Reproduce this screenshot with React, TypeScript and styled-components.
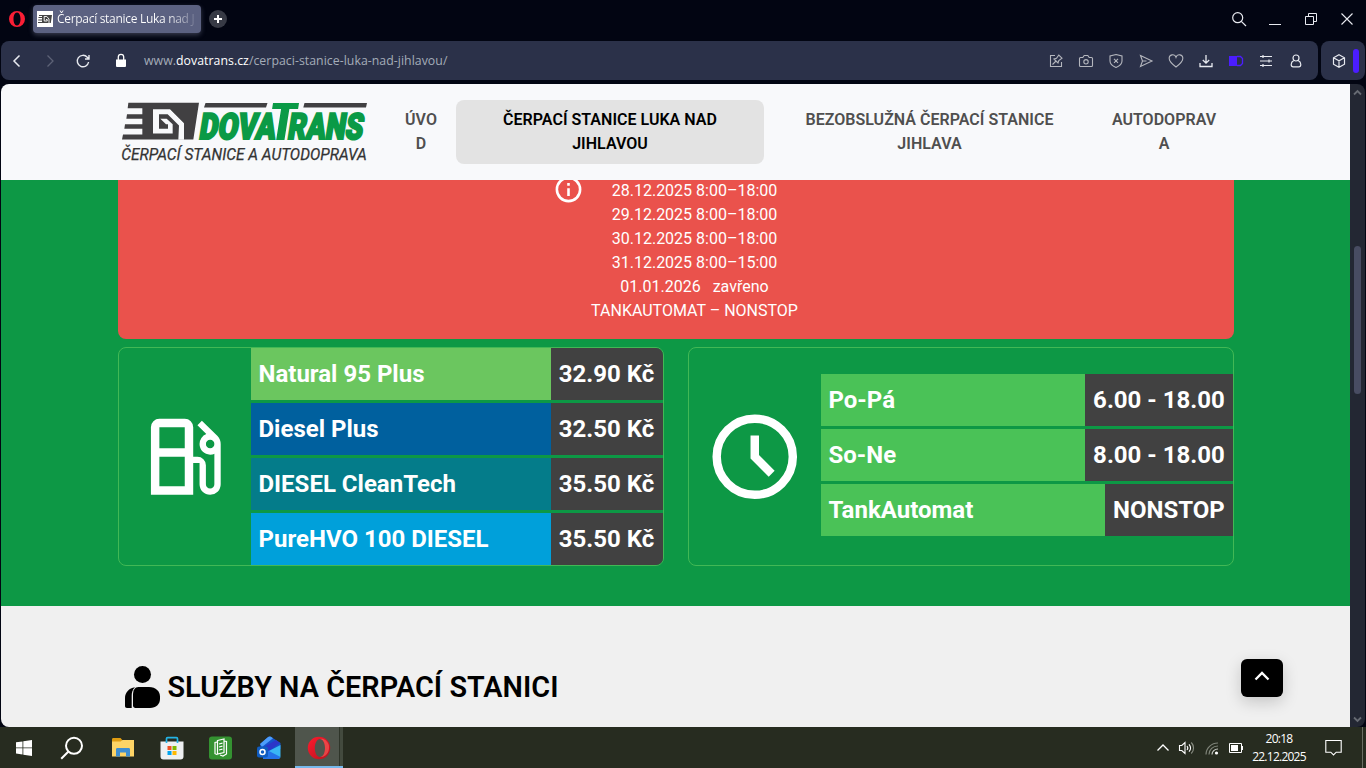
import React from 'react';
import styled, { createGlobalStyle } from 'styled-components';

const GlobalStyle = createGlobalStyle`
  * { box-sizing: border-box; }
  body { margin: 0; background: #020512; overflow: hidden; }
  svg { display: block; flex: none; }
`;

const uiFont = '"Open Sans", "Noto Sans", sans-serif';

const Desktop = styled.div`
  width: 1366px;
  height: 768px;
  display: flex;
  flex-direction: column;
  overflow: hidden;
  background: #020512;
  font-family: Roboto, sans-serif;
`;

const TabBar = styled.div`
  height: 41px;
  flex: none;
  display: flex;
  align-items: center;
  padding: 0 11px 3px 8px;
`;

const Tab = styled.div`
  width: 168px;
  height: 28px;
  margin: 0 8px 0 7px;
  padding: 0 4px;
  display: flex;
  align-items: center;
  gap: 4px;
  border-radius: 4px;
  background: #5b6181;
  box-shadow: 0 2px 5px rgba(120, 125, 150, 0.45);
`;

const TabTitle = styled.span`
  flex: 1;
  overflow: hidden;
  white-space: nowrap;
  font: 12px/20px ${uiFont};
  letter-spacing: -0.3px;
  color: transparent;
  background: linear-gradient(90deg, #fff 78%, #5b6181 102%);
  background-clip: text;
  -webkit-background-clip: text;
`;

const WindowButtons = styled.div`
  margin-left: auto;
  display: flex;
  align-items: center;
  gap: 20px;
`;

const AddressRow = styled.div`
  height: 39px;
  flex: none;
  display: flex;
  gap: 3px;
  padding: 0 1px;
`;

const AddressBar = styled.div`
  width: 1317px;
  display: flex;
  align-items: center;
  border-radius: 8px;
  background: #2b3149;
  padding: 0 14px 0 8px;
`;

const NavIcons = styled.div`
  display: flex;
  align-items: center;
  gap: 17px;
`;

const Url = styled.div`
  margin-left: 15px;
  font: 12.3px/20px ${uiFont};
  letter-spacing: 0.04px;
  color: #a4acb8;
  b { font-weight: 400; color: #fff; }
`;

const Tools = styled.div`
  margin-left: auto;
  display: flex;
  gap: 14px;
`;

const SideButton = styled.div`
  width: 44px;
  border-radius: 8px;
  background: #2b3149;
  display: flex;
  align-items: center;
  padding-left: 10px;
  gap: 6px;
`;

const SideAccent = styled.i`
  width: 6px;
  height: 24px;
  border-radius: 3px;
  background: #4b1dff;
`;

const Viewport = styled.div`
  height: 643px;
  margin: 4px 1px 0;
  flex: none;
  display: flex;
  border-radius: 8px;
  overflow: hidden;
`;

const Page = styled.main`
  width: 1349px;
  display: flex;
  flex-direction: column;
  position: relative;
`;

const Scrollbar = styled.div`
  width: 15px;
  background: #232733;
  display: flex;
  flex-direction: column;
  align-items: center;
  justify-content: space-between;
  padding: 5px 0 4px;
`;

const ScrollThumb = styled.i`
  width: 7px;
  height: 148px;
  margin-top: -172px;
  border-radius: 4px;
  background: #484c62;
`;

const Header = styled.header`
  height: 96px;
  flex: none;
  background: #f8f9fb;
  display: flex;
  align-items: center;
  padding-left: 117px;
`;

const Menu = styled.nav`
  display: flex;
  margin-left: 18px;
`;

const MenuItem = styled.a<{ $w: number; $ml?: number; $active?: boolean }>`
  width: ${p => p.$w}px;
  height: 64px;
  margin-left: ${p => p.$ml ?? 0}px;
  padding: 8px 0;
  border-radius: 8px;
  text-align: center;
  white-space: pre-line;
  font-size: 16px;
  line-height: 24px;
  font-weight: 600;
  letter-spacing: 0.02px;
  color: ${p => (p.$active ? '#000' : '#4f4f4f')};
  background: ${p => (p.$active ? '#e3e3e3' : 'transparent')};
`;

const GreenSection = styled.section`
  height: 426px;
  flex: none;
  background: #0d9845;
  padding: 0 116px 0 117px;
`;

const Alert = styled.div`
  height: 159px;
  overflow: hidden;
  border-radius: 0 0 8px 8px;
  background: #ea524c;
  color: #fff;
  display: flex;
  justify-content: center;
  align-items: flex-start;
  gap: 7.5px;
  padding-right: 1.5px;
  font-size: 16px;
  line-height: 24px;
  text-align: center;
  svg { margin-top: -6.5px; }
`;

const AlertText = styled.div`
  margin-top: -1px;
  white-space: pre;
`;

const Cards = styled.div`
  margin-top: 8px;
  display: flex;
  gap: 24px;
`;

const Card = styled.div`
  width: 546px;
  height: 219px;
  border: 1px solid #42b855;
  border-radius: 8px;
  overflow: hidden;
  display: flex;
  align-items: center;
`;

const CardIcon = styled.div`
  width: 132px;
  display: flex;
  justify-content: center;
  svg { fill: #fff; }
`;

const Rows = styled.div<{ $tail?: boolean }>`
  flex: 1;
  display: flex;
  flex-direction: column;
  gap: 3px;
  padding-bottom: ${p => (p.$tail ? 3 : 0)}px;
`;

const Row = styled.div`
  display: flex;
  font-size: 24px;
  line-height: 36px;
  font-weight: 700;
  color: #fff;
`;

const RowName = styled.div<{ $bg: string }>`
  flex: 1;
  padding: 8px 7.5px;
  background: ${p => p.$bg};
`;

const RowValue = styled.div`
  min-width: 112px;
  padding: 8px 8.2px 8px 7.8px;
  background: #414141;
`;

const Services = styled.section`
  flex: 1;
  background: #f0f0f0;
  padding: 58px 0 0 117px;
`;

const Heading = styled.h2`
  margin: 0;
  display: flex;
  align-items: center;
  gap: 0.5px;
  font-size: 28.8px;
  line-height: 46px;
  font-weight: 600;
  letter-spacing: 0.04px;
  color: #000;
`;

const TopButton = styled.button`
  position: absolute;
  right: 67px;
  bottom: 30px;
  width: 42px;
  height: 38px;
  border: 0;
  border-radius: 6px;
  background: #000;
  display: flex;
  align-items: center;
  justify-content: center;
  padding: 0 1px 4px 0;
  box-shadow: 0 5px 16px rgba(0, 0, 0, 0.18);
`;

const Taskbar = styled.footer`
  height: 41px;
  flex: none;
  display: flex;
  background: #272c20;
  color: #fff;
`;

const TaskItem = styled.div<{ $active?: boolean; $nudge?: number }>`
  width: ${p => (p.$active ? 48 : 49.2)}px;
  display: flex;
  align-items: center;
  justify-content: center;
  background: ${p => (p.$active ? 'linear-gradient(90deg, #4f554c 44px, #2e3429 44px, #2e3429 45px, #434a3e 45px)' : 'transparent')};
  box-shadow: ${p => (p.$active ? 'inset 0 -2px #76b9ed' : 'none')};
  padding-right: ${p => p.$nudge ?? 0}px;
`;

const Tray = styled.div`
  margin-left: auto;
  display: flex;
  align-items: center;
  padding-right: 3px;
`;

const Clock = styled.div`
  width: 70px;
  margin: 0 11px 0 0;
  text-align: center;
  font: 12px/18px ${uiFont};
  letter-spacing: -0.75px;
`;

const ShowDesktop = styled.i`
  width: 1px;
  height: 41px;
  margin-left: 20px;
  background: #6a6e63;
`;

type LineIconProps = { size?: number; w?: number; color?: string; children: React.ReactNode };
const LineIcon = ({ size = 16, w = 1.1, color = '#e8eaf0', children }: LineIconProps) => (
  <svg width={size} height={size} viewBox="0 0 16 16" fill="none" stroke={color} strokeWidth={w}>{children}</svg>
);

const Favicon = () => (
  <svg width="16" height="16" viewBox="0 0 16 16">
    <path fill="#fff" d="M0 0h16v16H0z" />
    <path fill="#444" d="M2 4h13l-1.200 8H1v-1h4v-1.500H1.200v-1H5V7H1.500V6H5V5H2z" />
    <path fill="none" stroke="#fff" strokeWidth=".9" d="M12 12V8L9.800 5.500H7.200v4.500h3V8.500H9" />
  </svg>
);

const Logo = () => (
  <svg width="264" height="64" viewBox="0 0 264 64">
    <g transform="translate(0 -2.500) scale(.33333)" fill="#414042">
      <path d="M31 16H243L226 126H12L15 111H73V94H19L21 80H73V64H25L27 50H73V32H29z" />
      <path fill="#f8f9fb" d="M105 35H156L198 77V127H181L183 84 149 50H123V94H150V80H144L127 64H146L164 80V108H105z" />
    </g>
    <g fill="#414042">
      <path d="M87.500 3h62l-1.500 4.500H86zM186.500 3H249l-1 4.500h-62.700z" />
    </g>
    <g transform="skewX(-9)" fill="#0a9a46" stroke="#0a9a46" strokeWidth="2.200" fontFamily="Roboto, sans-serif" fontWeight="900">
      <text x="86.500" y="38.800" fontSize="36" textLength="76" lengthAdjust="spacingAndGlyphs">DOVA</text>
      <text x="175" y="38.800" fontSize="36" textLength="75" lengthAdjust="spacingAndGlyphs">RANS</text>
      <path stroke="none" d="M155.500 3h26v6h-8.700v31H164.500V9h-9z" />
    </g>
    <text x="3.300" y="60.300" fontSize="16" fontStyle="italic" fontFamily="Roboto, sans-serif" fill="#333" stroke="#333" strokeWidth=".25" textLength="245.500" lengthAdjust="spacingAndGlyphs">ČERPACÍ STANICE A AUTODOPRAVA</text>
  </svg>
);

const FuelIcon = () => (
  <svg width="101.500" height="101.500" viewBox="0 0 24 24">
    <path d="M4 21V5q0-.825.588-1.413T6 3h6q.825 0 1.413.588T14 5v7h1q.825 0 1.413.588T17 14v4.500q0 .425.288.713T18 19.500t.713-.288T19 18.500v-7.200q-.225.125-.475.163T18 11.500q-1.050 0-1.775-.725T15.500 9q0-.8.438-1.438T17.100 6.650L15 4.550l1.050-1.050 3.700 3.600q.375.375.563.875T20.500 9v9.500q0 1.050-.725 1.775T18 21t-1.775-.725T15.500 18.500v-5H14V21zm2-11h6V5H6zm12 0q.425 0 .713-.288T19 9t-.288-.712T18 8t-.712.288T17 9t.288.713T18 10M6 19h6v-7H6z" />
  </svg>
);

const ClockIcon = () => (
  <svg width="101.500" height="101.500" viewBox="0 0 24 24">
    <circle cx="12" cy="12" r="9" fill="none" stroke="#fff" strokeWidth="2" />
    <path d="M15.300 16.700 16.700 15.300 13 11.600V7H11v5.400z" />
  </svg>
);

const InfoIcon = () => (
  <svg width="31" height="31" viewBox="0 0 24 24" fill="#fff">
    <circle cx="12" cy="12" r="9" fill="none" stroke="#fff" strokeWidth="2" />
    <path d="M11 11h2v6h-2zM11 7h2v2h-2z" />
  </svg>
);

const PersonIcon = () => (
  <svg width="49" height="46" viewBox="0 0 49 46">
    <circle cx="24.500" cy="10.500" r="8.500" />
    <path d="M20.500 23H31c7 0 11 4.500 11 9.500V35c0 5-4 9-10 9H17.500c-1.500 0-2.500-1-2.500-2.500V31c0-5 1.800-8 5.500-8z" />
    <path d="M17 23.200c-2.800 2.500-3.300 5.800-3.300 8.800v12H9c-1.300 0-2-.7-2-2v-8c0-5.500 4-10 10-10.800z" />
  </svg>
);

const OperaBig = () => (
  <svg width="24" height="24" viewBox="0 0 24 24">
    <defs>
      <linearGradient id="op" x1="0" x2="1" y1="0" y2="1"><stop offset="0" stopColor="#ff1b2d" /><stop offset="1" stopColor="#b5121f" /></linearGradient>
    </defs>
    <path fill="url(#op)" fillRule="evenodd" d="M12 .8a11.200 11.200 0 1 0 0 22.400A11.200 11.200 0 0 0 12 .8zm1 2.200c3 0 5 4 5 9s-2 9-5 9-5.200-4-5.200-9S10 3 13 3z" />
    <path fill="#ff6b62" d="M13 3c4-1 7 2 8.500 5 1.500 4 0 9-2.500 11-2 1.800-4 2-6 2 3 0 5-4 5-9s-2-9-5-9z" opacity=".55" />
  </svg>
);

const fuels = [
  { name: 'Natural 95 Plus', price: '32.90 Kč', color: '#6bc65f' },
  { name: 'Diesel Plus', price: '32.50 Kč', color: '#00609e' },
  { name: 'DIESEL CleanTech', price: '35.50 Kč', color: '#047c8a' },
  { name: 'PureHVO 100 DIESEL', price: '35.50 Kč', color: '#00a0da' },
];

const hours = [
  { name: 'Po-Pá', time: '6.00 - 18.00' },
  { name: 'So-Ne', time: '8.00 - 18.00' },
  { name: 'TankAutomat', time: 'NONSTOP' },
];

const notice = [
  '28.12.2025 8:00–18:00',
  '29.12.2025 8:00–18:00',
  '30.12.2025 8:00–18:00',
  '31.12.2025 8:00–15:00',
  '01.01.2026   zavřeno',
  'TANKAUTOMAT – NONSTOP',
].join('\n');

const grey = '#b4b6bd';

export default function App() {
  return (
    <Desktop>
      <GlobalStyle />
      <TabBar>
        <svg width="18" height="18" viewBox="0 0 18 18">
          <path fill="#fa1e35" fillRule="evenodd" d="M9 1a8 8 0 1 0 0 16A8 8 0 0 0 9 1zm0 1.500c2.300 0 3.500 3 3.500 6.500s-1.200 6.500-3.500 6.500S5.500 12.500 5.500 9 6.700 2.500 9 2.500z" />
        </svg>
        <Tab>
          <Favicon />
          <TabTitle>Čerpací stanice Luka nad J</TabTitle>
        </Tab>
        <svg width="18" height="18" viewBox="0 0 18 18">
          <circle cx="9" cy="9" r="9" fill="#373a45" />
          <path d="M9 5v8M5 9h8" stroke="#fff" strokeWidth="2" />
        </svg>
        <WindowButtons>
          <LineIcon w={1.200}><circle cx="6.700" cy="6.700" r="5" /><path d="m10.300 10.300 4.700 4.700" /></LineIcon>
          <LineIcon w={1}><path d="M2 13.500h12" /></LineIcon>
          <LineIcon w={1}><path d="M2.500 5.500h8v8h-8zM5.500 5.500v-3h8v8h-3" /></LineIcon>
          <LineIcon w={1.100}><path d="m2.500 2.500 11 11m0-11-11 11" /></LineIcon>
        </WindowButtons>
      </TabBar>

      <AddressRow>
        <AddressBar>
          <NavIcons>
            <LineIcon w={1.500}><path d="m10.500 2.500-5.500 5.500 5.500 5.500" /></LineIcon>
            <LineIcon w={1.300} color="#5d6276"><path d="m5.500 2.500 5.500 5.500-5.500 5.500" /></LineIcon>
            <LineIcon w={1.400}><path d="M13.600 9a5.700 5.700 0 1 1-1.300-4.700l1.500 1.400M14 2v4h-4" /></LineIcon>
            <svg width="16" height="16" viewBox="0 0 16 16" style={{ marginLeft: 5 }}>
              <path fill="#fff" d="M3 6.500h10V13a1 1 0 0 1-1 1H4a1 1 0 0 1-1-1z" />
              <path fill="none" stroke="#fff" strokeWidth="1.300" d="M5.300 7V4a2.700 2.700 0 0 1 5.400 0v3" />
            </svg>
          </NavIcons>
          <Url>www.<b>dovatrans.cz</b>/cerpaci-stanice-luka-nad-jihlavou/</Url>
          <Tools>
            <LineIcon color={grey}><path d="M7 2.500H2.500v11h11V9M4.500 11.500 8 8M6 6l4 4 .8-2.500L14 5.200 10.800 2 8.500 5.200z" /></LineIcon>
            <LineIcon color={grey}><path d="M2.500 4.500h2.300l1.400-2h3.600l1.400 2h2.300c.7 0 1 .3 1 1v7c0 .7-.3 1-1 1h-11c-.7 0-1-.3-1-1v-7c0-.7.300-1 1-1z" /><circle cx="8" cy="8.800" r="2.200" /></LineIcon>
            <LineIcon color={grey}><path d="M8 1.500 14 3v5c0 3-2.500 5-6 6.500C4.500 13 2 11 2 8V3zM6 5.800l4 4m0-4-4 4" /></LineIcon>
            <LineIcon color={grey}><path d="m2.500 2.500 11.500 5.500-11.500 5.500 2-5.500zM4.500 8h4" /></LineIcon>
            <LineIcon color={grey}><path d="M8 14C4.500 11.500 1.200 9 1.200 5.600A3.500 3.500 0 0 1 8 4.200a3.500 3.500 0 0 1 6.800 1.400C14.800 9 11.500 11.500 8 14z" /></LineIcon>
            <LineIcon w={1.300}><path d="M8 2v8M4.800 7 8 10.200 11.200 7M2 10v3.500h12V10" /></LineIcon>
            <svg width="16" height="16" viewBox="0 0 16 16"><path fill="#4b1dff" d="M1 3h8v10H1z" /><path fill="none" stroke="#4b1dff" strokeWidth="1.300" d="M9 3.500h3.500l2 2v5l-2 2H9" /></svg>
            <LineIcon w={1.200}><path d="M2 3.500h12M2 8h12M2 12.500h12M5 2v3M11 6.500v3M5 11v3" /></LineIcon>
            <LineIcon w={1.200}><circle cx="8" cy="5" r="3" /><path d="M5.800 7.500C3.800 8.500 3.200 10 3.200 11.500c0 1.500.8 2.300 2 2.300h5.600c1.200 0 2-.8 2-2.300 0-1.500-.6-3-2.600-4" /></LineIcon>
          </Tools>
        </AddressBar>
        <SideButton>
          <LineIcon w={1.200}><path d="m8 1.800 5.500 3v6.400L8 14.200l-5.500-3V4.800zM2.500 4.800 8 7.800l5.500-3M8 7.800v6.400" /></LineIcon>
          <SideAccent />
        </SideButton>
      </AddressRow>

      <Viewport>
        <Page>
          <Header>
            <Logo />
            <Menu>
              <MenuItem $w={42}>{'ÚVO\nD'}</MenuItem>
              <MenuItem $w={308} $ml={14} $active>{'ČERPACÍ STANICE LUKA NAD\nJIHLAVOU'}</MenuItem>
              <MenuItem $w={292} $ml={19.5}>{'BEZOBSLUŽNÁ ČERPACÍ STANICE\nJIHLAVA'}</MenuItem>
              <MenuItem $w={138} $ml={19.5}>{'AUTODOPRAV\nA'}</MenuItem>
            </Menu>
          </Header>
          <GreenSection>
            <Alert>
              <InfoIcon />
              <AlertText>{notice}</AlertText>
            </Alert>
            <Cards>
              <Card>
                <CardIcon><FuelIcon /></CardIcon>
                <Rows>
                  {fuels.map(f => (
                    <Row key={f.name}>
                      <RowName $bg={f.color}>{f.name}</RowName>
                      <RowValue>{f.price}</RowValue>
                    </Row>
                  ))}
                </Rows>
              </Card>
              <Card>
                <CardIcon><ClockIcon /></CardIcon>
                <Rows $tail>
                  {hours.map(h => (
                    <Row key={h.name}>
                      <RowName $bg="#4ac257">{h.name}</RowName>
                      <RowValue>{h.time}</RowValue>
                    </Row>
                  ))}
                </Rows>
              </Card>
            </Cards>
          </GreenSection>
          <Services>
            <Heading><PersonIcon />SLUŽBY NA ČERPACÍ STANICI</Heading>
          </Services>
          <TopButton>
            <LineIcon w={2.300} color="#fff"><path d="m1.500 11.500 6.500-6.500 6.500 6.500" /></LineIcon>
          </TopButton>
        </Page>
        <Scrollbar>
          <svg width="9" height="7" viewBox="0 0 9 7"><path d="m1 5.500 3.500-3.500L8 5.500" fill="none" stroke="#666a72" strokeWidth="1.800" /></svg>
          <ScrollThumb />
          <svg width="9" height="7" viewBox="0 0 9 7"><path d="M1 1.500 4.500 5 8 1.500" fill="none" stroke="#666a72" strokeWidth="1.800" /></svg>
        </Scrollbar>
      </Viewport>

      <Taskbar>
        <TaskItem $nudge={1.2}>
          <svg width="16" height="16" viewBox="0 0 16 16" fill="#fff"><path d="M0 2.300 6.500 1.400v6.100H0zM7.300 1.300 16 0v7.500H7.300zM0 8.300h6.500v6.200L0 13.600zM7.300 8.300H16V16l-8.700-1.300z" /></svg>
        </TaskItem>
        <TaskItem $nudge={4}>
          <svg width="24" height="24" viewBox="0 0 24 24" fill="none" stroke="#fff" strokeWidth="2"><circle cx="14" cy="9.800" r="8" /><path d="m8.200 15.700-7 7" /></svg>
        </TaskItem>
        <TaskItem>
          <svg width="22" height="19" viewBox="0 0 22 19">
            <path fill="#e09d12" d="M0 1.500C0 .7.500 0 1.300 0h7.200l2 2.200-2 2H0z" />
            <path fill="#fdd466" d="M0 3.500h8.500l2-1.500H22v16.500H0z" />
            <path fill="#3f8ed0" d="M4 18.500v-7.200c0-.7.600-1.300 1.300-1.300h11.400c.7 0 1.300.6 1.300 1.300v7.200h-4v-4H8v4z" />
          </svg>
        </TaskItem>
        <TaskItem $nudge={1}>
          <svg width="24" height="24" viewBox="0 0 24 24">
            <path fill="#eef0f1" d="M.5 5.500h23v15a3 3 0 0 1-3 3h-17a3 3 0 0 1-3-3z" />
            <path fill="none" stroke="#24b4e6" strokeWidth="1.700" d="M6.500 7V2.800c0-.7.400-1.100 1.100-1.100h8.800c.7 0 1.100.4 1.100 1.100V7" />
            <path fill="#f25022" d="M7.500 10h4v4h-4z" /><path fill="#7fba00" d="M12.500 10h4v4h-4z" /><path fill="#00a4ef" d="M7.500 15h4v4h-4z" /><path fill="#ffb900" d="M12.500 15h4v4h-4z" />
          </svg>
        </TaskItem>
        <TaskItem $nudge={1}>
          <svg width="23" height="24" viewBox="0 0 23 24">
            <rect y=".5" width="23" height="23" rx="3" fill="#349231" />
            <g fill="none" stroke="#fff" strokeWidth="1.200"><path d="M8.500 4.500 15 3v13.500l-6.500 1.500zM8 6l-2 .5v11.200l2.500 1M15 5l2.500.5V18l-3.500 2-3-1" /><path d="m10 8 3.500-.8M10 11l3.500-.8M10 14l3.500-.8" /></g>
          </svg>
        </TaskItem>
        <TaskItem $nudge={3}>
          <svg width="24" height="24" viewBox="0 0 24 24">
            <path fill="#1553cc" d="m3 8 7.500-6.500c1.500-1.200 3-1.200 4.500 0L23.500 7v6L5 20z" />
            <path fill="#4c9dfb" d="m3 8 7.500-6.500c1.500-1.200 3-1.200 4.500 0l1 .8L5 11z" />
            <path fill="#2c35c9" d="m5 12 14-8 4 3-14 10z" />
            <path fill="#39b6f4" d="M23.500 9v11a3 3 0 0 1-3 3H6l2-6z" />
            <path fill="#2472e8" d="m8 13 15.500 8c-.5 1.200-1.500 2-3 2H6z" />
            <rect y="10.500" width="11" height="11" rx="2" fill="#0f5cc0" />
            <circle cx="5.500" cy="16" r="2.500" fill="none" stroke="#fff" strokeWidth="1.500" />
          </svg>
        </TaskItem>
        <TaskItem $active><OperaBig /></TaskItem>

        <Tray>
          <LineIcon w={1.300} color="#fff"><path d="m2.500 10.500 5.500-5.500 5.500 5.500" /></LineIcon>
          <svg width="18" height="16" viewBox="0 0 18 16" fill="none" stroke="#fff" strokeWidth="1.100" style={{ marginLeft: 7 }}>
            <path d="M1.500 5.500h2.300L7 2.500v11l-3.200-3H1.500zM9 6c1 1.200 1 2.800 0 4M11 4.300c1.900 2.200 1.900 5.200 0 7.400" /><path stroke="#8a8e84" d="M13.300 2.500c3 3.200 3 7.800 0 11" />
          </svg>
          <svg width="16" height="16" viewBox="0 0 16 16" fill="none" stroke="#7f8479" strokeWidth="1.200" style={{ marginLeft: 8 }}>
            <path d="M2 14.500C2 8 7.500 3 14 3M5 14.500C5 9.500 9 6 14 6" /><path stroke="#c9ccc5" d="M8 14.500c0-3 2.500-5.500 6-5.500" /><circle cx="12.500" cy="13" r="1.600" fill="#fff" stroke="none" />
          </svg>
          <svg width="16" height="10" viewBox="0 0 16 10" style={{ marginLeft: 8 }}>
            <path fill="none" stroke="#fff" d="M1.500.5h12v9h-12zM14.500 3v4" /><path fill="#fff" d="M3 2h7v6H3z" />
          </svg>
          <Clock>20:18<br />22.12.2025</Clock>
          <svg width="17" height="17" viewBox="0 0 17 17" fill="none" stroke="#fff" strokeWidth="1.100"><path d="M.8 1.500h15.400v11.700h-5L8.500 16l-2.700-2.800h-5z" /></svg>
          <ShowDesktop />
        </Tray>
      </Taskbar>
    </Desktop>
  );
}
